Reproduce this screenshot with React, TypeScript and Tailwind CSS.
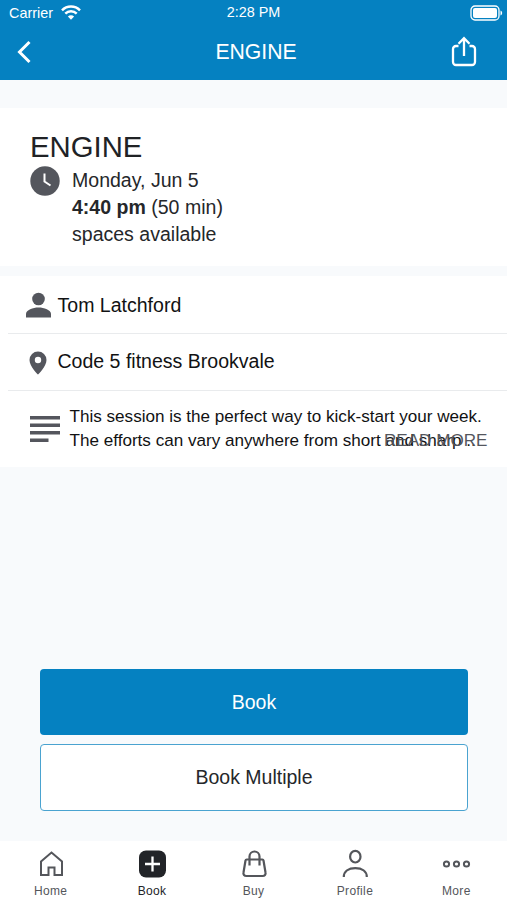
import type { ReactNode } from "react";

function StatusBar() {
  return (
    <div className="grid h-6 grid-cols-3 items-center pr-[4px] pl-[9px] text-[14.4px] leading-6">
      <div className="flex items-center gap-[8px]">
        <span className="pt-px">Carrier</span>
        <svg width="20" height="15" viewBox="0 0 20 15" fill="none" stroke="white" strokeWidth="2.5">
          <path d="M1 5.3a12.8 12.8 0 0 1 18 0M4.3 8.7a8.1 8.1 0 0 1 11.4 0" />
          <path d="M10 14.7 6.9 11.6a4.4 4.4 0 0 1 6.2 0Z" fill="white" stroke="none" />
        </svg>
      </div>
      <span className="pr-[5px] pb-px text-center">2:28 PM</span>
      <svg className="justify-self-end" width="33" height="16" viewBox="0 0 33 16">
        <rect x="1" y="1" width="28" height="14" rx="4" fill="none" stroke="white" strokeWidth="1.3" />
        <rect x="3" y="3" width="24" height="10" rx="2" fill="white" />
        <path d="M30.5 5.5c2.2 1 2.2 4 0 5Z" fill="white" />
      </svg>
    </div>
  );
}

function Row({ icon, children }: { icon: ReactNode; children: ReactNode }) {
  return (
    <div className="ml-2 flex h-[57px] items-center border-b border-[#e9ebed] pl-[17px] text-[19.55px] text-[#111213]">
      <span className="mr-[6.5px] flex w-[26px] justify-center">{icon}</span>
      {children}
    </div>
  );
}

function Tab({ label, active, children }: { label: string; active?: boolean; children: ReactNode }) {
  return (
    <div className={`flex flex-1 flex-col items-center pt-[8px] text-[12px] leading-[14px] tracking-[0.35px] ${active ? "text-[#222428]" : "text-[#54565b]"}`}>
      <svg width="32" height="30" viewBox="0 0 32 30" fill="none" stroke="currentColor" strokeWidth="2">
        {children}
      </svg>
      <span className="mt-[5px]">{label}</span>
    </div>
  );
}

export default function App() {
  return (
    <div className="flex h-[900px] w-[507px] flex-col overflow-hidden bg-[#f8fafc] font-['Liberation_Sans',Arial,sans-serif] text-[#25272a]">
      <header className="h-20 bg-[#0581c1] text-white">
        <StatusBar />
        <div className="grid h-14 grid-cols-3 items-center pr-[28px] pl-[17px]">
          <svg width="14" height="24" viewBox="0 0 14 24" fill="none" stroke="white" strokeWidth="3">
            <path d="M12.5 2 2.5 12l10 10" />
          </svg>
          <span className="ml-[16px] pb-px text-center text-[21.2px]">ENGINE</span>
          <svg className="justify-self-end" width="30" height="32" viewBox="0 0 30 32" fill="none" stroke="white" strokeWidth="2.3">
            <path d="M9.5 10H7a3 3 0 0 0-3 3v13a3 3 0 0 0 3 3h16a3 3 0 0 0 3-3V13a3 3 0 0 0-3-3h-2.500M15 20V2.500M9.500 7.700l5.500-5.500 5.500 5.500" />
          </svg>
        </div>
      </header>

      <section className="mt-7 h-[158px] bg-white pt-[21px] pl-[30px]">
        <h1 className="text-[29.300px] leading-[36px] text-[#202225]">ENGINE</h1>
        <div className="flex gap-[12px]">
          <svg className="mt-[1px]" width="30" height="30" viewBox="0 0 30 30">
            <circle cx="15" cy="15" r="14.700" fill="#54565d" />
            <path d="M14.500 7.500v8l6 4" fill="none" stroke="white" strokeWidth="2" />
          </svg>
          <div className="pt-[2px] text-[19.550px] leading-[27px]">
            <div>Monday, Jun 5</div>
            <div><b>4:40 pm</b> (50 min)</div>
            <div>spaces available</div>
          </div>
        </div>
      </section>

      <section className="mt-[10px] h-[191px] bg-white pt-px">
        <Row
          icon={
            <svg width="26" height="26" viewBox="0 0 26 26" fill="#54565d">
              <circle cx="13.500" cy="7" r="6.300" />
              <path d="M1 25.500V22c0-4 7-6.500 12.500-6.500S26 18 26 22v3.500Z" />
            </svg>
          }
        >
          <span className="pt-px">Tom Latchford</span>
        </Row>
        <Row
          icon={
            <svg className="mt-[1px]" width="18" height="24" viewBox="0 0 18 24" fill="#54565d">
              <path fillRule="evenodd" d="M9 .500A8.500 8.500 0 0 0 .500 9C.500 15.500 9 23.500 9 23.500S17.500 15.500 17.500 9A8.500 8.500 0 0 0 9 .500Zm0 5.300a3.200 3.200 0 1 1 0 6.400 3.200 3.200 0 0 1 0-6.400Z" />
            </svg>
          }
        >
          Code 5 fitness Brookvale
        </Row>
        <div className="relative flex pt-[14px] pl-[30px]">
          <svg className="mt-[11px] mr-[9.5px]" width="30" height="27" viewBox="0 0 30 27" fill="#54565d">
            <path d="M0 0h30v3.500H0ZM0 7.500h30V11H0ZM0 15h30v3.500H0ZM0 22.500h18.500V26H0Z" />
          </svg>
          <p className="text-[17.100px] leading-6 whitespace-nowrap text-[#111213]">
            This session is the perfect way to kick-start your week.
            <br />
            The efforts can vary anywhere from short and sharp ..
          </p>
          <span className="absolute top-[38px] right-[19.5px] text-[17.100px] leading-6 text-[#54565d]">READ MORE</span>
        </div>
      </section>

      <div className="mx-[40px] mt-[202px] flex flex-col gap-[9px] text-[19.500px]">
        <button className="mr-[-1px] h-[66px] rounded-[4px] bg-[#0581c1] pt-px text-white">Book</button>
        <button className="mr-[-1px] h-[67px] rounded-[4px] border-[1.500px] border-[#4aa3d0] bg-white pt-px text-[#25272a]">Book Multiple</button>
      </div>

      <nav className="mt-auto flex h-[59px] bg-white">
        <Tab label="Home">
          <path d="M6 12.500 16.500 3.500l10.500 9V26h-7.500v-7.500h-6V26H6Z" />
        </Tab>
        <Tab label="Book" active>
          <rect x="3" y="1.500" width="27" height="27" rx="7" fill="currentColor" stroke="none" />
          <path d="M16.500 7.500v15M9 15h15" stroke="white" strokeWidth="2.300" />
        </Tab>
        <Tab label="Buy">
          <path d="M8.700 10.500h15.600q1 0 1.200 1l2 12c.400 2-.800 3.500-2.800 3.500H8.300c-2 0-3.200-1.500-2.800-3.500l2-12q.200-1 1.200-1ZM11.500 16.500V7.500a5 5 0 0 1 10 0v9" strokeWidth="2.200" />
        </Tab>
        <Tab label="Profile">
          <ellipse cx="16.300" cy="7.700" rx="5.200" ry="5.800" strokeWidth="2.200" />
          <path d="M4.800 28c0-6 5-8.800 11.500-8.800s11.500 2.800 11.500 8.800" strokeWidth="2.200" />
        </Tab>
        <Tab label="More">
          <circle cx="6.500" cy="15" r="2.600" />
          <circle cx="16.500" cy="15" r="2.600" />
          <circle cx="26.500" cy="15" r="2.600" />
        </Tab>
      </nav>
    </div>
  );
}
